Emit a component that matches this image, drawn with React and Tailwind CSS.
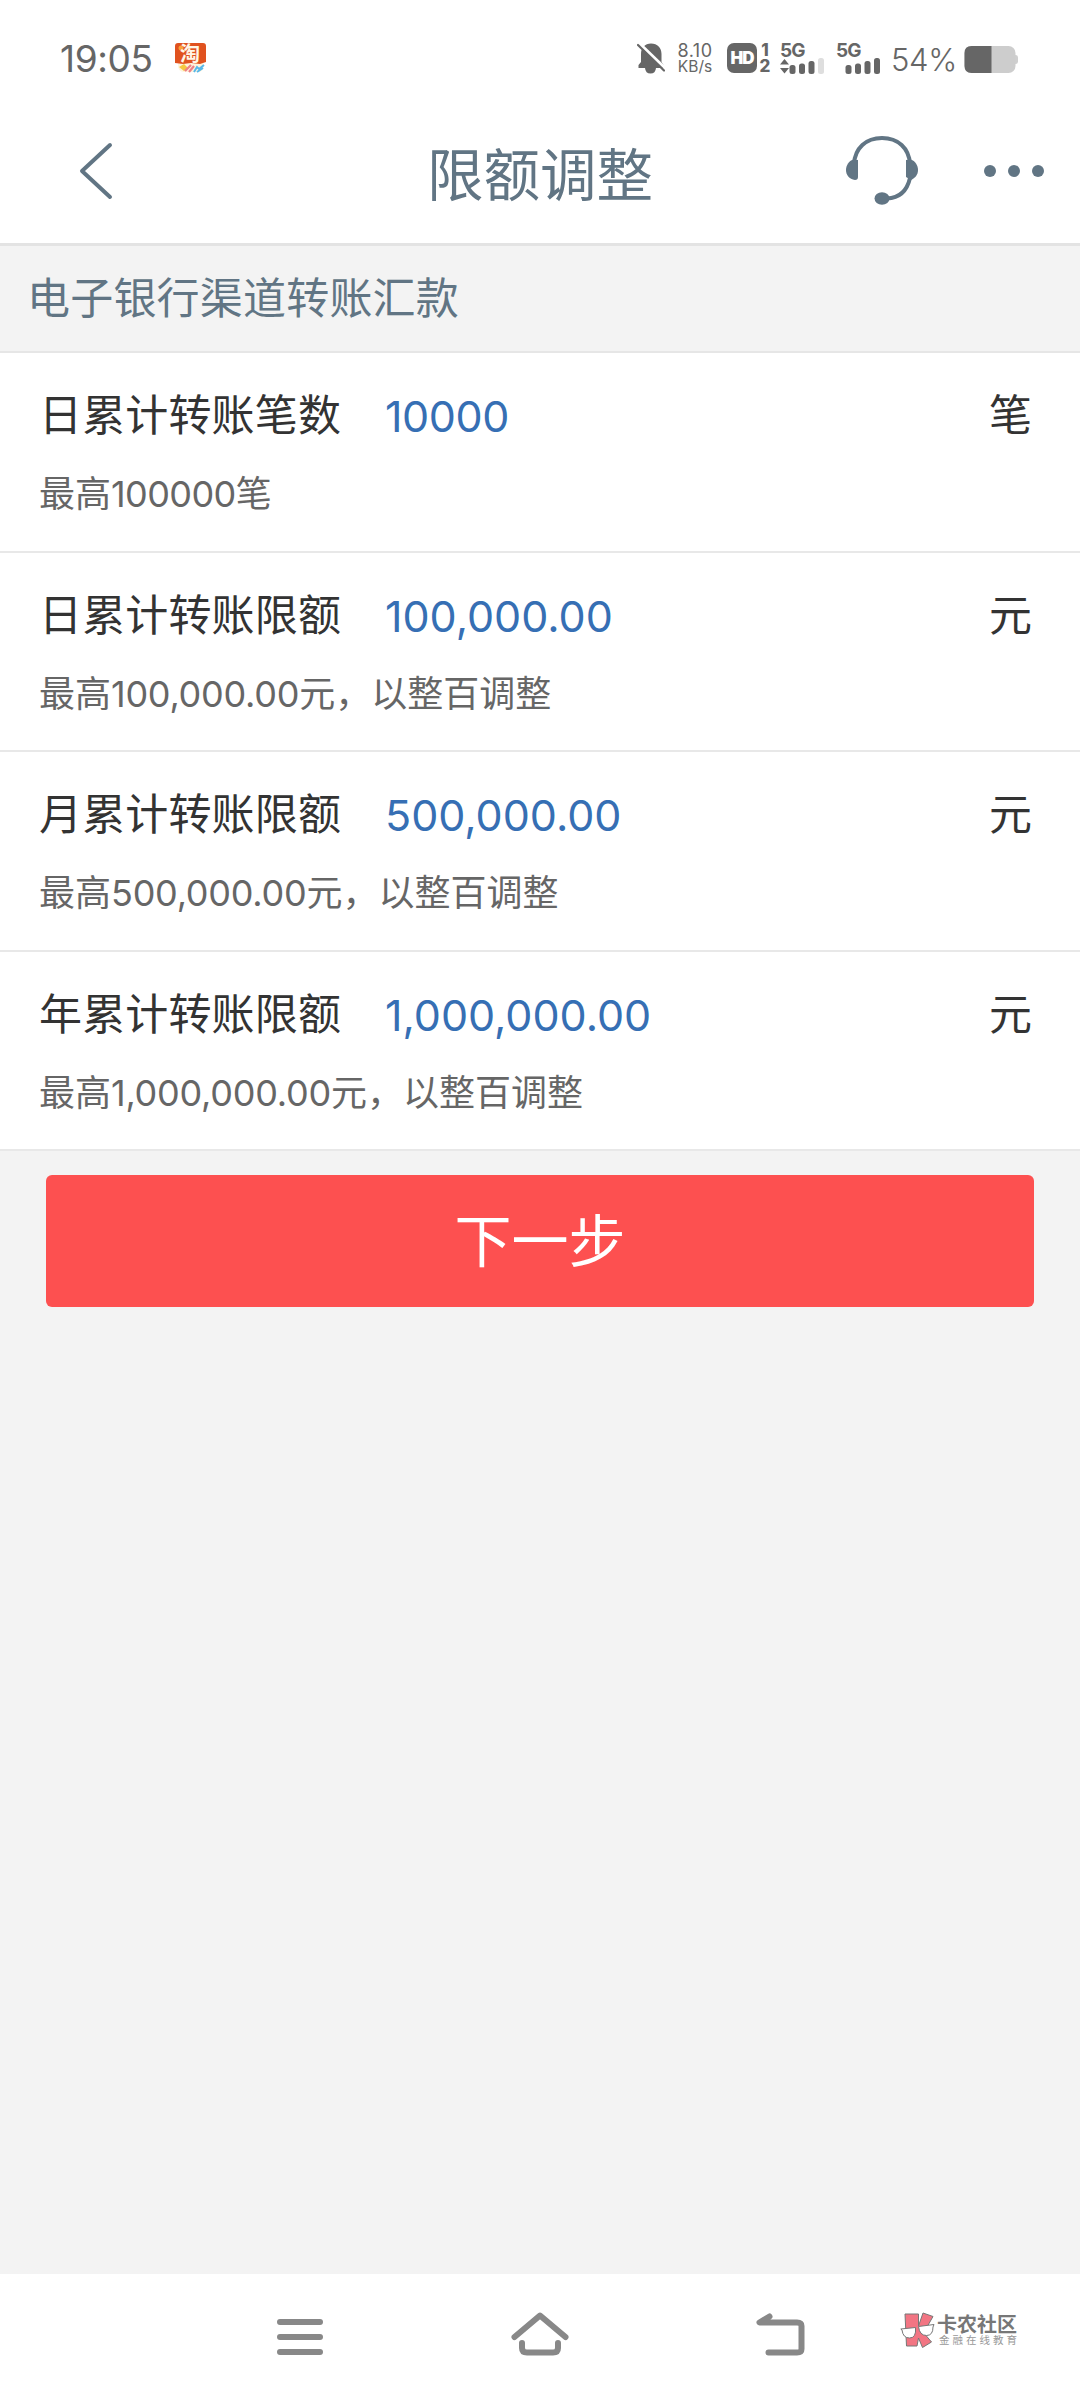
import React from "react";

const rows = [
  { label: "日累计转账笔数", value: "10000", unit: "笔", cap: "100000", suffix: "笔" },
  { label: "日累计转账限额", value: "100,000.00", unit: "元", cap: "100,000.00", suffix: "元，以整百调整" },
  { label: "月累计转账限额", value: "500,000.00", unit: "元", cap: "500,000.00", suffix: "元，以整百调整" },
  { label: "年累计转账限额", value: "1,000,000.00", unit: "元", cap: "1,000,000.00", suffix: "元，以整百调整" },
];

function ShoppingAppIcon() {
  return (
    <div className="relative h-[30px] w-[31px] shrink-0">
      <svg viewBox="0 0 31 30" className="block h-full w-full">
        <path d="M4 15 H27 L29 23 Q28 29 23 29 H9 Q3 29 3 22 Z" fill="#fff3dc" />
        <path d="M3 0 H28 Q31 0 31 3 V19 L25 21 L16 20 L8 21 L0 20 V3 Q0 0 3 0 Z" fill="#e0521f" />
        <circle cx="6" cy="5" r="2.500" fill="#f9a13a" />
        <path d="M4 24 L9 21 L13 25 L9 28 Z" fill="#f5c842" />
        <path d="M10 28 L16 22 M14 29 L19 23" stroke="#ef7f86" strokeWidth="2.200" />
        <path d="M19 29 L22 24 L24 26 L29 22 M22 29 L28 25" stroke="#57b8ea" strokeWidth="2" fill="none" />
      </svg>
      <span className="absolute top-px left-[5px] text-[20px] leading-[20px] font-bold text-[#fff6e6]">淘</span>
    </div>
  );
}

function MutedBellIcon() {
  return (
    <svg viewBox="0 0 28 31" className="h-[31px] w-[28px] shrink-0">
      <path d="M14 0.500 C20.500 0.500 24.500 5 24.500 11 V19 L26.500 22 V25 H19 Q18.500 30.500 13.500 30.500 Q8.500 30.500 8 25 H1.500 V22 L4 19 V11 C4 5 8 0.500 14 0.500 Z" fill="#666" />
      <path d="M2 0 L28 25" stroke="#fff" strokeWidth="3" />
      <path d="M1 2 L27 27.500" stroke="#666" strokeWidth="2.200" strokeLinecap="round" />
    </svg>
  );
}

function SignalIcon({ first }) {
  return (
    <div className="relative h-[31px] w-[45px] shrink-0">
      <span className="absolute top-0 left-0 text-[19px] leading-[15px] font-bold tracking-[-1px]">5G</span>
      <svg viewBox="0 0 45 31" className="block h-full w-full">
        {first && <path d="M0 21.500 L4.500 16 L9 21.500 Z M0 25 L4.500 30.500 L9 25 Z" fill="#666" />}
        <rect x="9.500" y="22" width="6" height="9" rx="2.500" fill="#666" />
        <rect x="19" y="20.500" width="6" height="10.500" rx="2.500" fill="#666" />
        <rect x="28.500" y="18" width="6" height="13" rx="2.500" fill="#666" />
        <rect x="38" y="15" width="6" height="16" rx="2.500" fill={first ? "#dedede" : "#666"} />
      </svg>
    </div>
  );
}

function StatusBar() {
  return (
    <div className="flex h-[110px] items-start pt-[43px] text-[#666]">
      <div className="ml-[60px] w-[115px] text-[37px] leading-[31px] tracking-[-0.4px]">19:05</div>
      <ShoppingAppIcon />
      <div className="ml-[431px] flex items-start">
        <MutedBellIcon />
        <div className="ml-[11px] w-[38px] text-center text-[18px] leading-[15px]">
          <div className="tracking-[0.5px]">8.10</div>
          <div className="mt-px text-[15.5px]">KB/s</div>
        </div>
        <div className="ml-[13px] flex h-[30px] w-[30px] items-center justify-center rounded-[7px] bg-[#666] text-[17px] leading-none font-black tracking-[-1px] text-white">HD</div>
        <div className="ml-[2px] w-[12px] text-center text-[17px] leading-[15px] font-extrabold">
          <div>1</div>
          <div className="mt-px">2</div>
        </div>
        <div className="ml-[9px]"><SignalIcon first /></div>
        <div className="ml-[11px]"><SignalIcon /></div>
        <div className="ml-[10px] w-[66px] text-[31px] leading-[33px] font-light tracking-[-0.3px]">54%</div>
        <svg viewBox="0 0 55 28" className="mt-[3px] ml-[7px] h-[28px] w-[55px]">
          <rect x="47" y="9" width="7" height="9" rx="2.500" fill="#cfcfcf" />
          <rect x="0.500" y="0" width="51" height="27" rx="7" fill="#cdcdcd" />
          <path d="M27.500 0 H7.500 Q0.500 0 0.500 7 V20 Q0.500 27 7.500 27 H27.500 Z" fill="#666" />
        </svg>
      </div>
    </div>
  );
}

function Header() {
  return (
    <header className="grid h-[136px] grid-cols-[1fr_auto_1fr] border-b-[3px] border-[#e3e3e3] text-[#617584]">
      <svg viewBox="0 0 36 60" className="mt-[31px] ml-[78px] h-[60px] w-[36px]" fill="none" stroke="currentColor" strokeWidth="4" strokeLinecap="round" strokeLinejoin="round">
        <path d="M32 4 L4 30 L32 56" />
      </svg>
      <h1 className="mt-[36px] text-[56.5px] leading-[60px]">限额调整</h1>
      <div className="mt-[25px] flex justify-end pr-[36px]">
        <svg viewBox="0 0 72 70" className="h-[70px] w-[72px]">
          <path d="M8 29 C9 13 20 3 36 3 C52 3 63 13 64 29 M64 43 C61 56 53 63 41 63.500" fill="none" stroke="currentColor" strokeWidth="4" />
          <path d="M12 25 V42 Q12 45 9 45 C3 44 0 40 0 35 C0 30 3 26 7 24.500 Z" fill="currentColor" />
          <path d="M60 25 L65 24.500 C69 26 72 30 72 35 C72 40 69 43 65 45 L60 42 Z" fill="currentColor" />
          <ellipse cx="36" cy="63.500" rx="7.500" ry="6.200" fill="currentColor" />
        </svg>
        <svg viewBox="0 0 60 12" className="mt-[30px] ml-[66px] h-[12px] w-[60px]" fill="currentColor">
          <circle cx="6" cy="6" r="6" />
          <circle cx="30" cy="6" r="6" />
          <circle cx="54" cy="6" r="6" />
        </svg>
      </div>
    </header>
  );
}

function LimitRow({ label, value, unit, cap, suffix }) {
  const grouped = value.includes(",");
  return (
    <li className="h-[199.5px] border-b-2 border-[#e8e8e8] bg-white pt-[37px] pr-[40px] pl-[39px]">
      <div className="flex text-[43px] leading-[50px] text-[#333]">
        <span className="w-[346px] tracking-[0.15px]">{label}</span>
        <span className={grouped ? "flex-1 pt-px text-[#366fb4]" : "flex-1 pt-px tracking-[-0.4px] text-[#366fb4]"}>{value}</span>
        <span className="mr-[8px]">{unit}</span>
      </div>
      <p className="mt-[31px] text-[36px] leading-[44px] text-[#666]">
        最高<span className={grouped ? "tracking-[-0.25px]" : "tracking-[-0.6px]"}>{cap}</span>{suffix}
      </p>
    </li>
  );
}

function NavBar() {
  return (
    <nav className="flex h-[126px] items-start bg-white text-[#888]">
      <svg viewBox="0 0 46 36" className="mt-[45px] ml-[277px] h-[36px] w-[46px]" fill="currentColor">
        <rect x="0" y="0" width="46" height="6" rx="3" />
        <rect x="0" y="15" width="46" height="6" rx="3" />
        <rect x="0" y="30" width="46" height="6" rx="3" />
      </svg>
      <svg viewBox="0 0 58 44" className="mt-[37.5px] ml-[188px] h-[44px] w-[58px]" fill="none" stroke="currentColor" strokeWidth="6" strokeLinecap="round" strokeLinejoin="round">
        <path d="M3.500 25 L29 3.500 L54.500 25" />
        <path d="M11 31 V36 Q11 40.500 16 40.500 H42 Q47 40.500 47 36 V31" />
      </svg>
      <svg viewBox="0 0 49 43" className="mt-[38.5px] ml-[187px] h-[43px] w-[49px]" fill="none" stroke="currentColor" strokeWidth="6" strokeLinecap="round" strokeLinejoin="round">
        <path d="M13.500 3.500 L3.500 9.500 H41 Q45.500 9.500 45.500 13 V36 Q45.500 39.500 41 39.500 H12.500" />
      </svg>
      <div className="mt-[38px] ml-[95px] flex">
        <svg viewBox="0 0 35 36" className="h-[36px] w-[35px]" stroke="#777" strokeWidth="1">
          <path d="M5 2 H18.500 V14 L23 1 L33 4.500 L27 15 L23 20 L31.500 30 L22.500 35.500 L18.500 26 L17 34 H6.500 Z" fill="#f27583" />
          <path d="M0.800 17 L15.500 15.500 Q16.500 26 9.500 26 Q3 26 2 18 Z" fill="#fff" />
          <path d="M18.500 14.500 L34 12.500 L33 15 Q33 23.500 26.500 23.500 Q19.500 23.500 18.500 14.500 Z" fill="#fff" />
        </svg>
        <div className="ml-[2px] pt-[2px] whitespace-nowrap">
          <div className="text-[20px] leading-[22px] font-bold text-[#777]">卡农社区</div>
          <div className="-mt-px ml-[2px] text-[10.5px] leading-[12px] tracking-[3px] text-[#999]">金融在线教育</div>
        </div>
      </div>
    </nav>
  );
}

export default function App() {
  return (
    <div className="flex h-[2400px] w-[1080px] flex-col overflow-hidden bg-[#f3f3f3] font-['Inter','Noto_Sans_CJK_SC',sans-serif]">
      <div className="bg-white">
        <StatusBar />
        <Header />
      </div>
      <main className="flex-1">
        <h2 className="h-[107px] border-b-2 border-[#e6e6e6] pt-[25px] pl-[27px] text-[43px] leading-[54px] tracking-[0.2px] text-[#617584]">电子银行渠道转账汇款</h2>
        <ul>
          {rows.map((row) => <LimitRow key={row.label} {...row} />)}
        </ul>
        <button className="mt-[24px] ml-[46px] block h-[132px] w-[988px] rounded-[6px] bg-[#fd5050] pt-[2px] text-[57px] leading-[130px] text-white">下一步</button>
      </main>
      <NavBar />
    </div>
  );
}
